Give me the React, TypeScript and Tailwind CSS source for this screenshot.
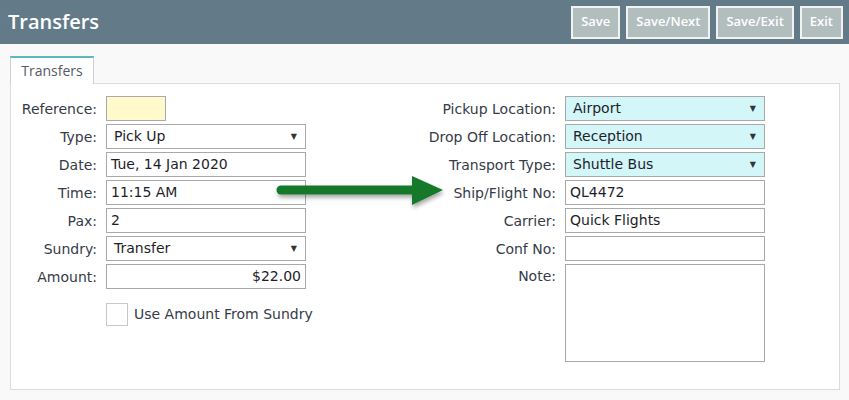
const labelFont = { fontFamily: '"DejaVu Sans", Verdana, sans-serif' };

function Label({ children, w }: { children: React.ReactNode; w: string }) {
  return (
    <div className={`${w} shrink-0 text-right text-[14px] leading-[24px] text-[#363b47]`}>{children}</div>
  );
}

function TextBox({ value = "", right = false, bg = "bg-white", w = "w-[200px]" }: { value?: string; right?: boolean; bg?: string; w?: string }) {
  return (
    <div
      className={`${w} h-[25px] border border-[#a9a9a9] ${bg} px-[4px] text-[14px] leading-[23px] text-[#1e1e2a] ${right ? "text-right" : ""}`}
    >
      {value}
    </div>
  );
}

function Select({ value, bg = "bg-white" }: { value: string; bg?: string }) {
  return (
    <div className={`w-[200px] h-[25px] border border-[#a9a9a9] ${bg} flex items-center justify-between pl-[7px] pr-[8px] text-[14px] text-[#1e1e2a]`}>
      <span>{value}</span>
      <span className="text-[8px] text-[#333]">▼</span>
    </div>
  );
}

export default function App() {
  return (
    <div className="relative w-[849px] h-[400px] bg-[#f9f9f9] overflow-hidden" style={labelFont}>
      <header className="h-[44px] bg-[#637b88] flex items-center justify-between pl-[8px] pr-[6px]">
        <h1 className="text-white text-[20px] font-semibold" style={{ fontFamily: '"Open Sans", sans-serif' }}>
          Transfers
        </h1>
        <div className="flex gap-[6px]" style={{ fontFamily: '"Open Sans", sans-serif' }}>
          {["Save", "Save/Next", "Save/Exit", "Exit"].map((b) => (
            <button
              key={b}
              className="h-[33px] border-2 border-[#f2f2f2] bg-[#b2bebd] px-[8px] text-[13px] font-semibold text-white"
            >
              {b}
            </button>
          ))}
        </div>
      </header>

      <div className="px-[10px] pt-[11px]">
        <div className="flex">
          <div
            className="relative top-[1px] h-[28px] w-[84px] border border-b-0 border-[#cfcfcf] border-t-2 border-t-[#5bb8bc] bg-white text-center text-[14px] leading-[25px] text-[#555a66]"
            style={{ fontFamily: '"Open Sans", sans-serif' }}
          >
            Transfers
          </div>
        </div>
        <div className="h-[307px] w-[830px] border border-[#dcdcdc] bg-white flex pt-[12px]">
          <div className="w-[295px] shrink-0 flex flex-col gap-[3px]">
            <div className="flex gap-[9px] items-center">
              <Label w="w-[86px]">Reference:</Label>
              <TextBox w="w-[60px]" bg="bg-[#fff9cc]" />
            </div>
            <div className="flex gap-[9px] items-center">
              <Label w="w-[86px]">Type:</Label>
              <Select value="Pick Up" />
            </div>
            <div className="flex gap-[9px] items-center">
              <Label w="w-[86px]">Date:</Label>
              <TextBox value="Tue, 14 Jan 2020" />
            </div>
            <div className="flex gap-[9px] items-center">
              <Label w="w-[86px]">Time:</Label>
              <TextBox value="11:15 AM" />
            </div>
            <div className="flex gap-[9px] items-center">
              <Label w="w-[86px]">Pax:</Label>
              <TextBox value="2" />
            </div>
            <div className="flex gap-[9px] items-center">
              <Label w="w-[86px]">Sundry:</Label>
              <Select value="Transfer" />
            </div>
            <div className="flex gap-[9px] items-center">
              <Label w="w-[86px]">Amount:</Label>
              <TextBox value="$22.00" right />
            </div>
            <div className="flex items-center gap-[6px] pl-[95px] mt-[11px] whitespace-nowrap">
              <div className="h-[23px] w-[22px] shrink-0 border border-[#c8c8c8] bg-white" />
              <span className="text-[14px] text-[#363b47]">Use Amount From Sundry</span>
            </div>
          </div>

          <div className="ml-[100px] flex flex-col gap-[3px]">
            <div className="flex gap-[9px] items-center">
              <Label w="w-[150px]">Pickup Location:</Label>
              <Select value="Airport" bg="bg-[#d3f6f9]" />
            </div>
            <div className="flex gap-[9px] items-center">
              <Label w="w-[150px]">Drop Off Location:</Label>
              <Select value="Reception" bg="bg-[#d3f6f9]" />
            </div>
            <div className="flex gap-[9px] items-center">
              <Label w="w-[150px]">Transport Type:</Label>
              <Select value="Shuttle Bus" bg="bg-[#d3f6f9]" />
            </div>
            <div className="flex gap-[9px] items-center">
              <Label w="w-[150px]">Ship/Flight No:</Label>
              <TextBox value="QL4472" />
            </div>
            <div className="flex gap-[9px] items-center">
              <Label w="w-[150px]">Carrier:</Label>
              <TextBox value="Quick Flights" />
            </div>
            <div className="flex gap-[9px] items-center">
              <Label w="w-[150px]">Conf No:</Label>
              <TextBox />
            </div>
            <div className="flex gap-[9px] items-start">
              <Label w="w-[150px]">Note:</Label>
              <div className="h-[98px] w-[200px] border border-[#a9a9a9] bg-white" />
            </div>
          </div>
        </div>
      </div>

      <svg className="absolute left-[270px] top-[172px]" width="180" height="44" viewBox="0 0 180 44">
        <defs>
          <filter id="sh" x="-10%" y="-30%" width="120%" height="160%">
            <feDropShadow dx="1" dy="3" stdDeviation="2" floodColor="#000" floodOpacity="0.35" />
          </filter>
        </defs>
        <g filter="url(#sh)">
          <line x1="11" y1="18" x2="148" y2="18" stroke="#16792a" strokeWidth="9" strokeLinecap="round" />
          <polygon points="142,4 173,18 142,33" fill="#16792a" />
        </g>
      </svg>
    </div>
  );
}
